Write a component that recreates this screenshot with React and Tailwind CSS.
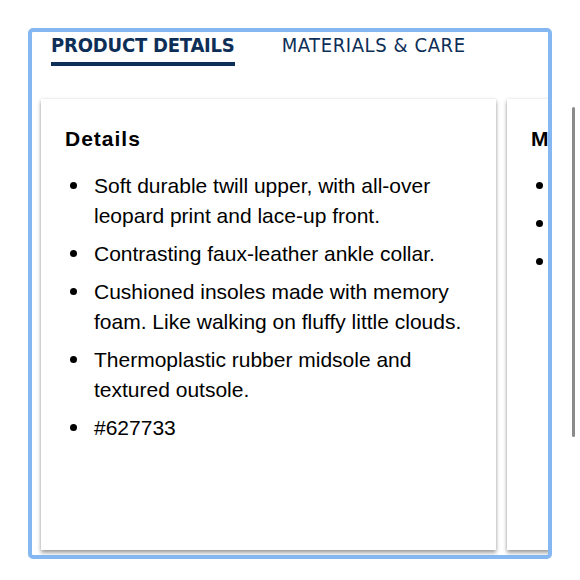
import React from 'react';

const details = [
  'Soft durable twill upper, with all-over leopard print and lace-up front.',
  'Contrasting faux-leather ankle collar.',
  'Cushioned insoles made with memory foam. Like walking on fluffy little clouds.',
  'Thermoplastic rubber midsole and textured outsole.',
  '#627733',
];

const materials = [
  'Upper: 100% cotton twill.',
  'Lining: textile.',
  'Outsole: rubber.',
];

const tabFont = { fontFamily: '"DejaVu Sans Condensed", "DejaVu Sans", sans-serif' };

const InfoCard = ({ title, items }) => (
  <div className="w-[455px] h-[451px] shrink-0 bg-white pt-[26px] px-[24px] shadow-[0_3px_4px_rgba(0,0,0,0.35),0_0_3px_rgba(0,0,0,0.12)]">
    <h2 className="text-[21px] leading-[28px] font-bold tracking-[1px] text-black whitespace-nowrap">{title}</h2>
    <ul className="mt-[18px] flex flex-col gap-[8px]">
      {items.map((item, i) => (
        <li key={i} className="flex text-[21px] leading-[30px] text-black">
          <span className="w-[29px] shrink-0 pl-[5px] pt-[11px]">
            <span className="block w-[7px] h-[7px] rounded-full bg-black"></span>
          </span>
          <span className="w-[378px] shrink-0">{item}</span>
        </li>
      ))}
    </ul>
  </div>
);

const App = () => {
  return (
    <div className="relative w-[580px] h-[580px] bg-white overflow-hidden" style={{ fontFamily: '"Liberation Sans", Arial, sans-serif' }}>
      <div className="ml-[28px] mt-[28px] w-[524px] h-[531px] border-4 border-[#85b8f2] rounded-[5px] overflow-hidden">
        {/* tabs */}
        <div className="flex gap-[47px] pl-[19px] pt-[2px] font-stretch-condensed" style={tabFont}>
          <div className="flex flex-col">
            <span className="text-[20px] leading-[22px] font-bold tracking-[-0.2px] text-[#0d2f57] whitespace-nowrap">PRODUCT DETAILS</span>
            <span className="mt-[6px] h-[4px] bg-[#0d2f57]"></span>
          </div>
          <div className="flex flex-col">
            <span className="text-[20px] leading-[22px] tracking-[0.6px] text-[#0d2f57] whitespace-nowrap">MATERIALS &amp; CARE</span>
          </div>
        </div>

        {/* cards */}
        <div className="flex gap-[11px] pl-[9px] mt-[33px]">
          <InfoCard title="Details" items={details} />
          <InfoCard title="Materials & Care" items={materials} />
        </div>
      </div>

      {/* page scrollbar */}
      <div className="absolute left-[572px] top-[107px] w-[3px] h-[330px] rounded-full bg-[#8a8a8a]"></div>
    </div>
  );
};

export default App;
